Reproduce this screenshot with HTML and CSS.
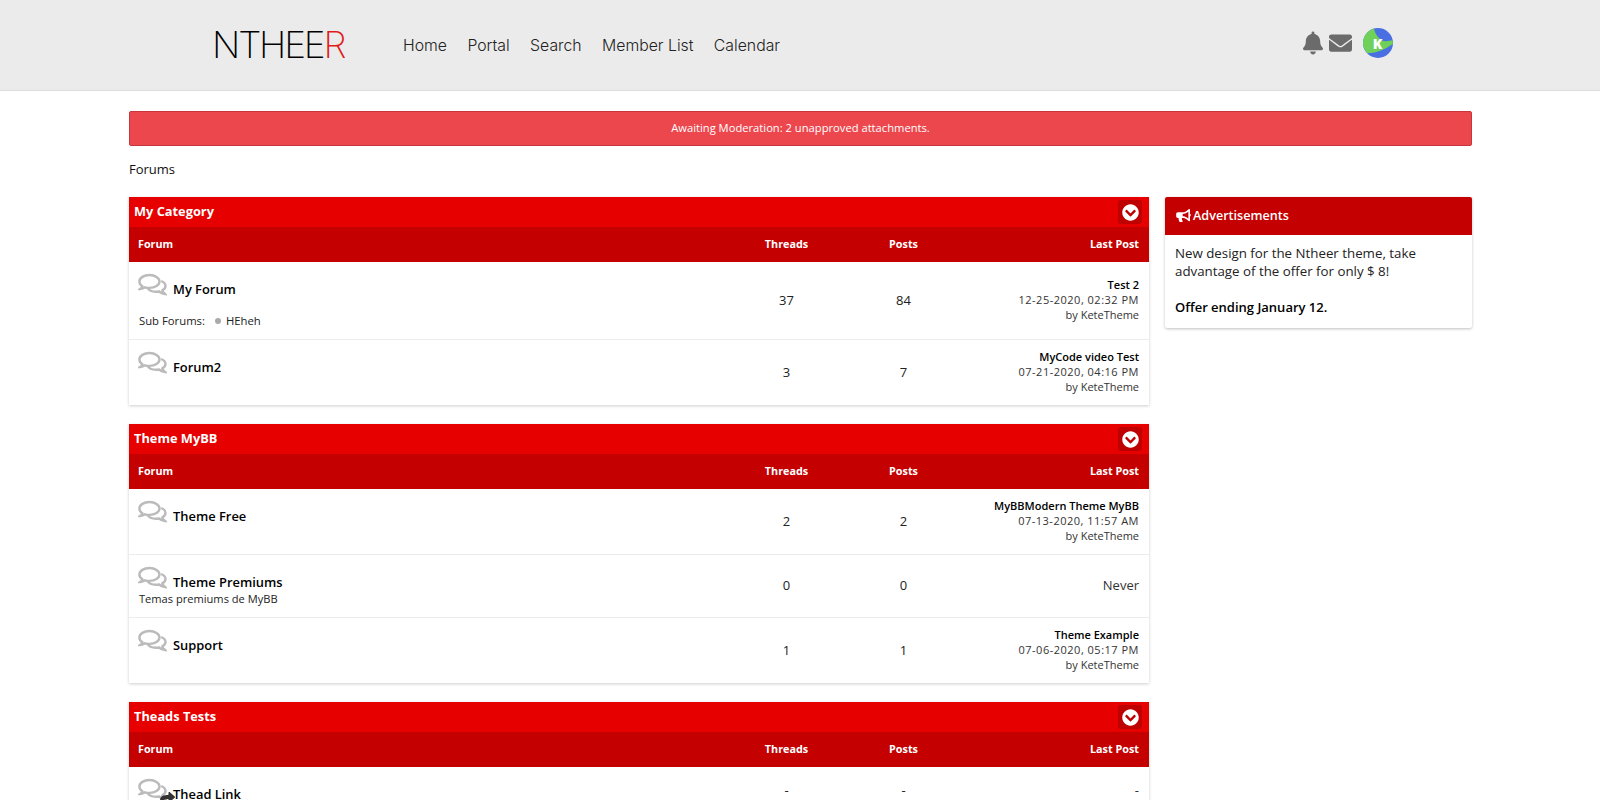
FILE: index.html
```html
<!DOCTYPE html>
<html lang="en">
<head>
<meta charset="utf-8">
<title>Forums</title>
<link rel="stylesheet" href="styles.css">
</head>
<body>
<svg class="defs" width="0" height="0" aria-hidden="true">
  <symbol id="comments" viewBox="0 0 29 24">
    <path d="M11.5 2C6 2 1.400 4.800 1.400 8.500c0 1.900 1.100 3.500 2.900 4.700-.3 1.100-1 2-2.100 2.800 1.900-.1 3.500-.7 4.900-1.700 1.300.4 2.800.6 4.400.6 5.500 0 10-2.900 10-6.400S17 2 11.500 2z" fill="none" stroke="currentColor" stroke-width="2.400"/>
    <path d="M23.200 8c2.600 1.100 4.300 2.900 4.300 5 0 1.800-1.200 3.300-3.100 4.400.3 1.300 1.200 2.400 2.600 3.600-2.400-.3-4.400-1.100-6-2.500-1 .2-2 .3-3 .3-4 0-7.400-1.600-8.600-4" fill="none" stroke="currentColor" stroke-width="2.400"/>
  </symbol>
  <symbol id="chev" viewBox="0 0 512 512">
    <path d="M504 256c0 137-111 248-248 248S8 393 8 256 119 8 256 8s248 111 248 248zM273 369.900l135.500-135.500c9.400-9.400 9.400-24.600 0-33.900l-17-17c-9.400-9.400-24.600-9.400-33.900 0L256 285.100 154.400 183.500c-9.400-9.400-24.600-9.400-33.900 0l-17 17c-9.400 9.400-9.400 24.600 0 33.900L239 369.900c9.400 9.400 24.600 9.400 34 0z" fill="currentColor"/>
  </symbol>
</svg>

<header class="topbar">
  <div class="logo">NTHEE<span class="logo-r">R</span></div>
  <nav class="nav">
    <a href="#">Home</a>
    <a href="#">Portal</a>
    <a href="#">Search</a>
    <a href="#">Member List</a>
    <a href="#">Calendar</a>
  </nav>
  <div class="user-icons">
    <svg class="bell" viewBox="0 0 448 512"><path fill="currentColor" d="M224 512c35.320 0 63.970-28.650 63.970-64H160.030c0 35.350 28.650 64 63.970 64zm215.390-149.710c-19.320-20.760-55.470-51.990-55.470-154.290 0-77.700-54.480-139.900-127.940-155.160V32c0-17.670-14.320-32-31.980-32s-31.980 14.330-31.980 32v20.840C118.560 68.100 64.080 130.300 64.080 208c0 102.300-36.150 133.530-55.470 154.290-6 6.450-8.660 14.160-8.610 21.710.11 16.400 12.980 32 32.100 32h383.800c19.120 0 32-15.600 32.100-32 .05-7.550-2.610-15.270-8.610-21.710z"/></svg>
    <svg class="mail" viewBox="0 64 512 384"><path fill="currentColor" d="M502.300 190.800c3.900-3.100 9.700-.2 9.700 4.700V400c0 26.500-21.500 48-48 48H48c-26.500 0-48-21.500-48-48V195.600c0-5 5.700-7.800 9.700-4.700 22.400 17.400 52.100 39.500 154.100 113.600 21.100 15.400 56.700 47.800 92.200 47.600 35.700.3 72-32.800 92.300-47.600 102-74.100 131.600-96.300 154-113.700zM256 320c23.200.4 56.600-29.200 73.400-41.400 132.700-96.300 142.800-104.700 173.400-128.700 5.800-4.500 9.200-11.500 9.200-18.900v-19c0-26.500-21.500-48-48-48H48C21.500 64 0 85.500 0 112v19c0 7.400 3.400 14.300 9.200 18.900 30.600 23.900 40.700 32.400 173.400 128.700 16.800 12.200 50.200 41.800 73.400 41.400z"/></svg>
    <svg class="avatar" viewBox="0 0 30 30">
      <circle cx="15" cy="15" r="15" fill="#4a6fe2"/>
      <path d="M11 .5C12 6 15 9 18 12c4 2 8 1 11.600 0l.2 4C25 19 18 24 8 25H4C1 21 0 18 0 15 0 8 5 2 11 .5z" fill="#6fd05a"/>
      <text class="avatar-k" x="14.500" y="21">K</text>
    </svg>
  </div>
</header>

<main class="page">
  <div class="alert">Awaiting Moderation: 2 unapproved attachments.</div>
  <div class="crumb">Forums</div>

  <div class="columns">
    <div class="forums">

      <section class="box">
        <div class="cat"><span class="cat-name">My Category</span><span class="toggle"><svg class="chev"><use href="#chev"/></svg></span></div>
        <div class="row thead"><div>Forum</div><div class="c">Threads</div><div class="c">Posts</div><div class="r">Last Post</div></div>
        <div class="row">
          <div class="fcell">
            <div class="fhead"><svg class="bubbles"><use href="#comments"/></svg><a class="ftitle" href="#">My Forum</a></div>
            <div class="subs"><span>Sub Forums:</span><i class="dot"></i><span>HEheh</span></div>
          </div>
          <div class="num">37</div><div class="num">84</div>
          <div class="last"><b>Test 2</b><span class="date">12-25-2020, 02:32 PM</span><span>by KeteTheme</span></div>
        </div>
        <div class="row">
          <div class="fcell">
            <div class="fhead"><svg class="bubbles"><use href="#comments"/></svg><a class="ftitle" href="#">Forum2</a></div>
          </div>
          <div class="num">3</div><div class="num">7</div>
          <div class="last"><b>MyCode video Test</b><span class="date">07-21-2020, 04:16 PM</span><span>by KeteTheme</span></div>
        </div>
      </section>

      <section class="box">
        <div class="cat"><span class="cat-name">Theme MyBB</span><span class="toggle"><svg class="chev"><use href="#chev"/></svg></span></div>
        <div class="row thead"><div>Forum</div><div class="c">Threads</div><div class="c">Posts</div><div class="r">Last Post</div></div>
        <div class="row">
          <div class="fcell">
            <div class="fhead"><svg class="bubbles"><use href="#comments"/></svg><a class="ftitle" href="#">Theme Free</a></div>
          </div>
          <div class="num">2</div><div class="num">2</div>
          <div class="last"><b>MyBBModern Theme MyBB</b><span class="date">07-13-2020, 11:57 AM</span><span>by KeteTheme</span></div>
        </div>
        <div class="row">
          <div class="fcell">
            <div class="fhead"><svg class="bubbles"><use href="#comments"/></svg><a class="ftitle" href="#">Theme Premiums</a></div>
            <div class="desc">Temas premiums de MyBB</div>
          </div>
          <div class="num">0</div><div class="num">0</div>
          <div class="last never">Never</div>
        </div>
        <div class="row">
          <div class="fcell">
            <div class="fhead"><svg class="bubbles"><use href="#comments"/></svg><a class="ftitle" href="#">Support</a></div>
          </div>
          <div class="num">1</div><div class="num">1</div>
          <div class="last"><b>Theme Example</b><span class="date">07-06-2020, 05:17 PM</span><span>by KeteTheme</span></div>
        </div>
      </section>

      <section class="box">
        <div class="cat"><span class="cat-name">Theads Tests</span><span class="toggle"><svg class="chev"><use href="#chev"/></svg></span></div>
        <div class="row thead"><div>Forum</div><div class="c">Threads</div><div class="c">Posts</div><div class="r">Last Post</div></div>
        <div class="row">
          <div class="fcell">
            <div class="fhead fhead-link">
              <svg class="bubbles"><use href="#comments"/></svg>
              <svg class="share" viewBox="0 0 512 512"><path fill="currentColor" d="M503.691 189.836L327.687 37.851C312.281 24.546 288 35.347 288 56.015v80.053C127.371 137.907 0 170.100 0 322.326c0 61.441 39.581 122.309 83.333 154.132 13.653 9.931 33.111-2.533 28.077-18.631C66.066 312.814 132.917 274.316 288 272.085V360c0 20.700 24.300 31.453 39.687 18.164l176.004-152c11.071-9.562 11.086-26.753 0-36.328z"/></svg>
              <a class="ftitle" href="#">Thead Link</a>
            </div>
          </div>
          <div class="num">-</div><div class="num">-</div>
          <div class="last never">-</div>
        </div>
      </section>

    </div>

    <aside class="side">
      <h3 class="side-head">
        <svg class="horn" viewBox="0 0 576 512"><path fill="currentColor" d="M576 240c0-23.630-12.950-44.040-32-55.120V32.010C544 23.260 537.020 0 512 0c-7.120 0-14.190 2.380-19.980 7.020l-85.030 68.030C364.280 109.190 310.660 128 256 128H64c-35.350 0-64 28.650-64 64v96c0 35.350 28.650 64 64 64h33.700c-1.390 10.480-2.180 21.140-2.180 32 0 39.770 9.260 77.350 25.560 110.940 5.190 10.690 16.520 17.060 28.400 17.060h74.280c26.050 0 41.690-29.840 25.900-50.560-16.400-21.520-26.150-48.360-26.150-77.440 0-11.110 1.620-21.790 4.410-32H256c54.660 0 108.280 18.810 150.980 52.950l85.030 68.030a32.023 32.023 0 0 0 19.980 7.020c24.920 0 32-22.780 32-32V295.130C563.050 284.040 576 263.630 576 240zm-96 141.420l-33.050-26.440C392.950 311.780 325.120 288 256 288v-96c69.120 0 136.950-23.780 190.950-66.980L480 98.580v282.840z"/></svg>
        Advertisements
      </h3>
      <div class="side-body">
        <p>New design for the Ntheer theme, take advantage of the offer for only $ 8!</p>
        <p class="offer">Offer ending January 12.</p>
      </div>
    </aside>
  </div>
</main>
</body>
</html>
```

FILE: styles.css
```css
* { box-sizing: border-box; }
html, body { margin: 0; padding: 0; }
body {
  background: #fff;
  color: #111;
  font-family: "Open Sans", "Noto Sans", sans-serif;
  font-size: 13px;
}
a { color: inherit; text-decoration: none; }
.defs { position: absolute; }

/* top bar */
.topbar {
  height: 91px;
  background: #ebebeb;
  border-bottom: 1px solid #ddd;
  display: flex;
  align-items: center;
  padding: 0 207px 0 212px;
}
.logo {
  width: 191px;
  font-family: "Inter", sans-serif;
  font-weight: 200;
  font-size: 37px;
  line-height: 28px;
  letter-spacing: -2.200px;
  color: #000;
}
.logo-r { color: #e01b1b; }
.nav {
  display: flex;
  gap: 20.400px;
  font-family: "Inter", sans-serif;
  font-weight: 300;
  font-size: 15.800px;
  color: #222;
}
.user-icons {
  margin-left: auto;
  display: flex;
  align-items: center;
  color: #6b6b6b;
  margin-top: -4px;
}
.bell { width: 20px; height: 24px; }
.mail { width: 23px; height: 18px; margin-left: 6px; }
.avatar { width: 30px; height: 30px; margin-left: 11px; }
.avatar-k {
  font-family: "Open Sans", sans-serif;
  font-weight: 800;
  font-size: 14px;
  fill: #fff;
  text-anchor: middle;
}

/* page */
.page { padding: 20px 128px 0 129px; }
.alert {
  height: 35px;
  background: #ed474e;
  border: 1px solid #c9353c;
  border-radius: 2px;
  color: #fff;
  font-size: 11.200px;
  line-height: 32px;
  text-align: center;
}
.crumb {
  font-size: 13px;
  line-height: 18px;
  margin: 14px 0 19px;
  color: #111;
}
.columns { display: flex; gap: 16px; align-items: flex-start; }
.forums { width: 1020px; display: flex; flex-direction: column; gap: 19px; }

.box {
  background: #fff;
  box-shadow: 0 1px 3px rgba(0, 0, 0, .2);
}
.cat {
  height: 30px;
  background: #e60000;
  color: #fff;
  font-weight: 700;
  font-size: 12.800px;
  display: flex;
  align-items: center;
  justify-content: space-between;
  padding: 0 7px 0 5px;
}
.cat-name { padding-bottom: 2px; }
.toggle {
  width: 24px;
  height: 24px;
  background: #bf0000;
  border-radius: 3px;
  display: flex;
  align-items: center;
  justify-content: center;
}
.chev { width: 17px; height: 17px; color: #fff; }

.row {
  display: grid;
  grid-template-columns: 599px 117px 117px 187px;
  border-bottom: 1px solid #ececec;
}
.row:last-child { border-bottom: 0; }
.thead {
  height: 35px;
  background: #c40000;
  color: #fff;
  font-size: 10.800px;
  font-weight: 700;
  align-items: center;
  padding: 0 0 2px;
  border-bottom: 0;
}
.thead > div:first-child { padding-left: 9px; }
.thead .c { text-align: center; }
.thead .r { text-align: right; padding-right: 10px; }

.fcell { padding: 11px 10px 11px 9px; }
.fhead { display: flex; align-items: flex-start; height: 26px; color: #bbb; }
.bubbles { width: 29px; height: 24px; flex: none; }
.ftitle {
  margin-left: 6px;
  font-size: 12.900px;
  font-weight: 600;
  line-height: 20px;
  margin-top: 6px;
  color: #000;
}
.fhead-link { position: relative; }
.share {
  position: absolute;
  left: 22px;
  top: 13px;
  width: 15px;
  height: 15px;
  color: #333;
}
.subs {
  display: flex;
  align-items: center;
  font-size: 11.300px;
  line-height: 14px;
  margin: 15px 0 0 1px;
  color: #222;
}
.dot {
  width: 6px;
  height: 6px;
  border-radius: 50%;
  background: #aaa;
  margin: 0 5px 0 10px;
}
.desc { font-size: 11.100px; line-height: 14px; margin-left: 1px; color: #222; }

.num {
  display: flex;
  align-items: center;
  justify-content: center;
  padding-bottom: 2px;
  font-size: 13px;
  color: #222;
}
.last {
  display: flex;
  flex-direction: column;
  justify-content: center;
  align-items: flex-end;
  padding: 9px 10px 11px;
  font-size: 11px;
  line-height: 15px;
  color: #333;
  text-align: right;
}
.last b { font-weight: 600; color: #000; }
.date { letter-spacing: .5px; }
.never { font-size: 13px; color: #333; }

/* sidebar */
.side {
  width: 307px;
  background: #fff;
  border-radius: 2px;
  box-shadow: 0 1px 3px rgba(0, 0, 0, .25);
}
.side-head {
  margin: 0;
  height: 38px;
  background: #c40000;
  border-radius: 2px 2px 0 0;
  color: #fff;
  font-size: 12.600px;
  font-weight: 600;
  display: flex;
  align-items: center;
  gap: 2px;
  padding: 0 0 2px 11px;
}
.horn { width: 15px; height: 13px; }
.side-body {
  padding: 9px 10px 12px;
  font-size: 13.300px;
  line-height: 18px;
  color: #222;
}
.side-body p { margin: 0; }
.side-body .offer { margin-top: 18px; color: #000; font-size: 13px; font-weight: 600; }
```
